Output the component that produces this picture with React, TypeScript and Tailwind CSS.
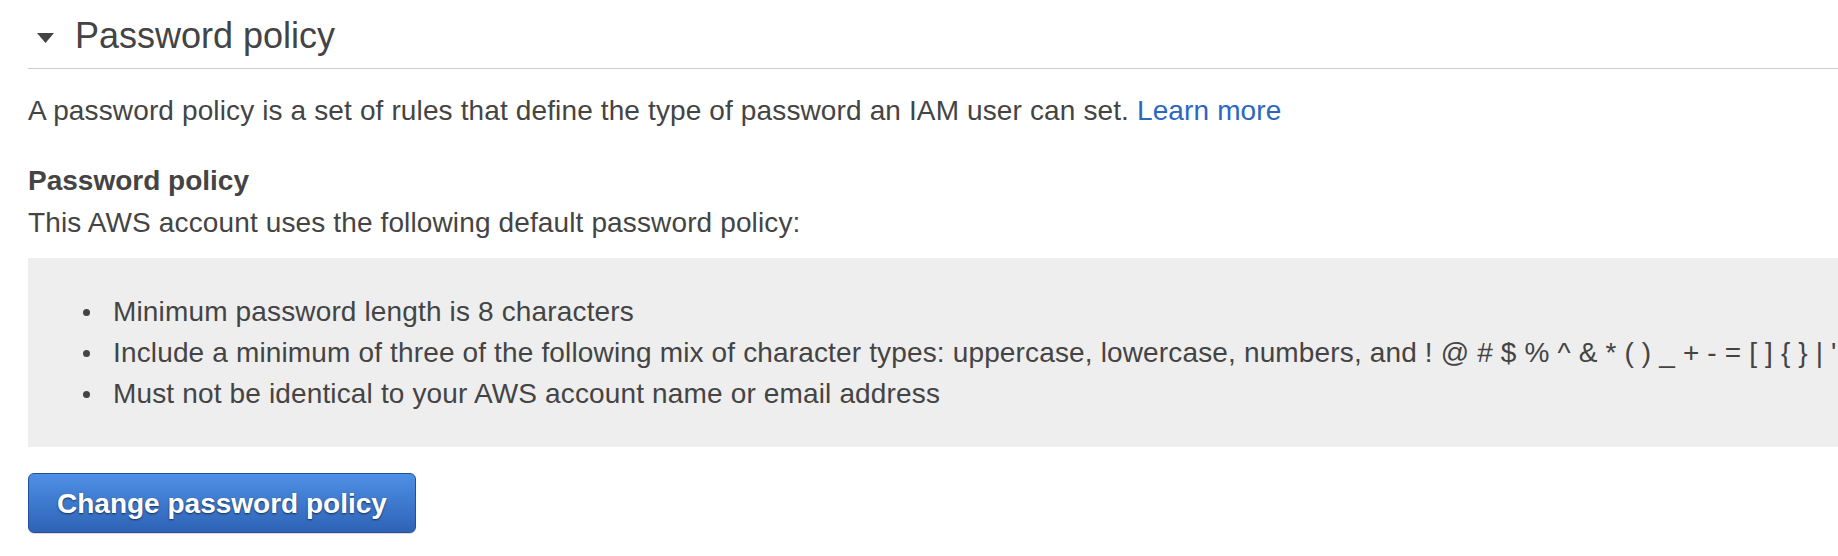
const rules = [
  'Minimum password length is 8 characters',
  "Include a minimum of three of the following mix of character types: uppercase, lowercase, numbers, and ! @ # $ % ^ & * ( ) _ + - = [ ] { } | '",
  'Must not be identical to your AWS account name or email address',
];

export default function App() {
  return (
    <div className="min-h-[556px] overflow-hidden bg-white pl-[28px] font-['Liberation_Sans',Arial,sans-serif] text-[#444]">
      <div className="flex items-start border-b border-[#ccc] py-[12px]">
        <svg width="17" height="10" viewBox="0 0 17 10" className="ml-[9px] mt-[21px] shrink-0" aria-hidden="true">
          <polygon points="0,0 17,0 8.5,10" fill="#444" />
        </svg>
        <h2 className="ml-[21px] mt-[3px] whitespace-nowrap text-[36px] leading-[41px]">Password policy</h2>
      </div>

      <p className="mt-[22px] whitespace-nowrap text-[28px] leading-[40px] tracking-[0.13px]">
        A password policy is a set of rules that define the type of password an IAM user can set.{' '}
        <a href="#" className="text-[#2b67be]">
          Learn more
        </a>
      </p>

      <h3 className="mt-[30px] text-[28px] font-bold leading-[40px]">Password policy</h3>
      <p className="mt-[2px] whitespace-nowrap text-[28px] leading-[40px] tracking-[0.13px]">
        This AWS account uses the following default password policy:
      </p>

      <ul className="mt-[15px] bg-[#eee] py-[33px] text-[28px] leading-[41px] tracking-[0.15px]">
        {rules.map((rule) => (
          <li key={rule} className="flex items-center whitespace-nowrap">
            <span className="ml-[55px] mr-[23px] h-[7px] w-[7px] shrink-0 translate-y-[1px] rounded-full bg-[#444]" />
            <span>{rule}</span>
          </li>
        ))}
      </ul>

      <button
        type="button"
        className="mt-[26px] h-[60px] rounded-[6px] border border-[#22509a] bg-gradient-to-b from-[#4e90e6] to-[#2e63b6] px-[28px] pt-[2px] text-[28px] font-bold leading-[40px] text-white shadow-[0_1px_1px_rgba(0,0,0,0.15)] [text-shadow:0_1px_2px_rgba(0,0,0,0.6)]"
      >
        Change password policy
      </button>
    </div>
  );
}
